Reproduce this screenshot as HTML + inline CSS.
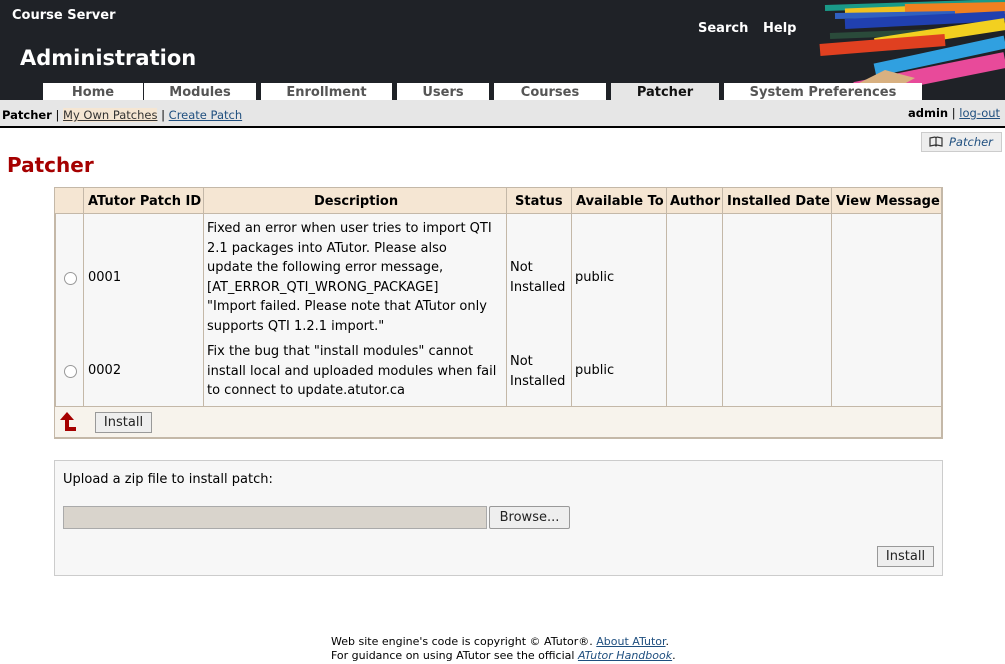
<!DOCTYPE html><html><head><meta charset="utf-8"><style>
*{margin:0;padding:0;box-sizing:border-box}
body{width:1005px;height:664px;position:relative;overflow:hidden;background:#fff;font-family:"DejaVu Sans","Liberation Sans",sans-serif;font-size:13px;color:#000}
.a{position:absolute;white-space:nowrap}
.tab{position:absolute;top:83px;height:17px;background:#fff;color:#555;font-weight:bold;font-size:13px;text-align:center;line-height:19px}
.c{position:absolute;border-right:1px solid #c4b8a8}
.t{position:absolute;line-height:19.5px}
a{color:#1f4f7f;text-decoration:underline}
.btn{position:absolute;background:#eee;border:1px solid #999;font-size:13px;text-align:center;line-height:19px;color:#222}
</style></head><body>
<div class="a" style="left:0;top:0;width:1005px;height:100px;background:#1f2227"></div>
<svg class="a" style="left:815px;top:0" width="190" height="100" viewBox="0 0 190 100">
<g stroke-linecap="butt">
<line x1="10" y1="8" x2="190" y2="2" stroke="#1a9a88" stroke-width="6"/>
<line x1="30" y1="12" x2="190" y2="6" stroke="#f0c020" stroke-width="7"/>
<line x1="90" y1="10" x2="190" y2="8" stroke="#f08020" stroke-width="12"/>
<line x1="20" y1="16" x2="140" y2="14" stroke="#3060c0" stroke-width="6"/>
<line x1="30" y1="24" x2="190" y2="16" stroke="#2040b0" stroke-width="10"/>
<line x1="15" y1="36" x2="120" y2="32" stroke="#2a4a3a" stroke-width="6"/>
<line x1="60" y1="44" x2="190" y2="24" stroke="#f2d020" stroke-width="12"/>
<line x1="5" y1="50" x2="130" y2="40" stroke="#e04020" stroke-width="12"/>
<line x1="60" y1="70" x2="190" y2="42" stroke="#30a0e0" stroke-width="13"/>
<line x1="40" y1="90" x2="190" y2="60" stroke="#e84a9a" stroke-width="16"/>
</g>
<polygon points="30,90 70,70 100,78 60,100" fill="#d8b080"/>
</svg>
<div class="a" style="left:12px;top:8px;color:#fff;font-weight:bold;font-size:13px">Course Server</div>
<div class="a" style="left:20px;top:46px;color:#fff;font-weight:bold;font-size:21px">Administration</div>
<div class="a" style="left:698px;top:21px;color:#fff;font-weight:bold;font-size:13px">Search</div>
<div class="a" style="left:763px;top:21px;color:#fff;font-weight:bold;font-size:13px">Help</div>
<div class="tab" style="left:43px;width:100px">Home</div>
<div class="tab" style="left:144px;width:112px">Modules</div>
<div class="tab" style="left:261px;width:131px">Enrollment</div>
<div class="tab" style="left:397px;width:92px">Users</div>
<div class="tab" style="left:494px;width:112px">Courses</div>
<div class="tab" style="left:611px;width:108px;background:#e6e6e6;color:#111">Patcher</div>
<div class="tab" style="left:724px;width:198px">System Preferences</div>
<div class="a" style="left:0;top:100px;width:1005px;height:28px;background:#e6e6e6;border-bottom:2px solid #000"></div>
<div class="a" style="left:2px;top:108px;font-size:11.5px"><b>Patcher</b> | <a style="background:#f5e6d3;color:#333">My Own Patches</a> | <a>Create Patch</a></div>
<div class="a" style="left:908px;top:106px;font-size:11.5px"><b>admin</b> | <a>log-out</a></div>
<div class="a" style="left:921px;top:132px;width:81px;height:20px;background:#eee;border:1px solid #ccc;font-size:11.5px;font-style:italic;color:#1f4f7f;line-height:18px;padding-left:27px">Patcher</div>
<svg class="a" style="left:929px;top:136px" width="14" height="11"><path d="M1 2 L6 1 L7 2 L8 1 L13 2 L13 10 L8 9 L7 10 L6 9 L1 10 Z M7 2 L7 10" fill="none" stroke="#333" stroke-width="1.2"/></svg>
<div class="a" style="left:7px;top:153px;color:#a50000;font-weight:bold;font-size:20px">Patcher</div>
<div class="a" style="left:54px;top:187px;width:889px;height:252px;border:2px solid #c4b8a8;border-top:1px solid #c4b8a8;background:#f7f7f7"></div>
<div class="a" style="left:55px;top:188px;width:886px;height:26px;background:#f5e6d3;border-bottom:1px solid #c4b8a8"></div>
<div class="a" style="left:55px;top:406px;width:886px;height:31px;background:#f7f3ec;border-top:1px solid #c4b8a8"></div>
<div class="c" style="left:55px;top:188px;width:29px;height:218px"></div>
<div class="c" style="left:84px;top:188px;width:120px;height:218px"></div>
<div class="c" style="left:204px;top:188px;width:303px;height:218px"></div>
<div class="c" style="left:507px;top:188px;width:65px;height:218px"></div>
<div class="c" style="left:572px;top:188px;width:95px;height:218px"></div>
<div class="c" style="left:667px;top:188px;width:56px;height:218px"></div>
<div class="c" style="left:723px;top:188px;width:109px;height:218px"></div>
<div class="a" style="top:194px;left:88px;font-weight:bold">ATutor Patch ID</div>
<div class="a" style="top:194px;left:314px;font-weight:bold">Description</div>
<div class="a" style="top:194px;left:515px;font-weight:bold">Status</div>
<div class="a" style="top:194px;left:576px;font-weight:bold">Available To</div>
<div class="a" style="top:194px;left:670px;font-weight:bold">Author</div>
<div class="a" style="top:194px;left:727px;font-weight:bold">Installed Date</div>
<div class="a" style="top:194px;left:836px;font-weight:bold">View Message</div>
<div class="a" style="left:64px;top:272px;width:13px;height:13px;border:1px solid #999;border-radius:50%;background:#fff"></div>
<div class="a" style="left:64px;top:365px;width:13px;height:13px;border:1px solid #999;border-radius:50%;background:#fff"></div>
<div class="a" style="left:88px;top:270px">0001</div>
<div class="a" style="left:88px;top:363px">0002</div>
<div class="t" style="left:207px;top:219px">Fixed an error when user tries to import QTI<br>2.1 packages into ATutor. Please also<br>update the following error message,<br>[AT_ERROR_QTI_WRONG_PACKAGE]<br>"Import failed. Please note that ATutor only<br>supports QTI 1.2.1 import."</div>
<div class="t" style="left:207px;top:342px">Fix the bug that "install modules" cannot<br>install local and uploaded modules when fail<br>to connect to update.atutor.ca</div>
<div class="t" style="left:510px;top:258px">Not<br>Installed</div>
<div class="t" style="left:510px;top:352px">Not<br>Installed</div>
<div class="a" style="left:575px;top:270px">public</div>
<div class="a" style="left:575px;top:363px">public</div>
<svg class="a" style="left:59px;top:412px" width="18" height="20"><path d="M8 0 L1 8 L6 8 L6 19 L17 19 L17 15 L10 15 L10 8 L15 8 Z" fill="#a50000"/></svg>
<div class="btn" style="left:95px;top:412px;width:57px;height:21px">Install</div>
<div class="a" style="left:54px;top:460px;width:889px;height:116px;background:#f7f7f7;border:1px solid #ccc"></div>
<div class="a" style="left:63px;top:472px">Upload a zip file to install patch:</div>
<div class="a" style="left:63px;top:506px;width:424px;height:23px;background:#d9d4cc;border:1px solid #aaa"></div>
<div class="btn" style="left:489px;top:506px;width:81px;height:23px;border-radius:2px;line-height:21px">Browse...</div>
<div class="btn" style="left:877px;top:546px;width:57px;height:21px">Install</div>
<div class="a" style="left:331px;top:635px;font-size:11px">Web site engine's code is copyright © ATutor®. <a>About ATutor</a>.</div>
<div class="a" style="left:331px;top:649px;font-size:11px">For guidance on using ATutor see the official <a style="font-style:italic">ATutor Handbook</a>.</div>
</body></html>
